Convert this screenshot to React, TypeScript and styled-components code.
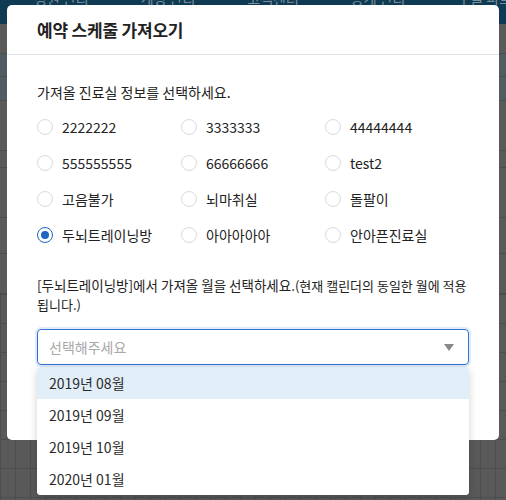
import React from "react";
import styled, { createGlobalStyle } from "styled-components";

const GlobalStyle = createGlobalStyle`
  html, body { margin: 0; padding: 0; }
  body {
    font-family: "Noto Sans CJK KR", "Noto Sans", sans-serif;
    color: #333;
  }
  * { box-sizing: border-box; }
`;

const Page = styled.div`
  position: relative;
  width: 506px;
  height: 500px;
  overflow: hidden;
  background: #5a5a5a;
  display: flex;
  flex-direction: column;
`;

const NavBar = styled.div`
  height: 24px;
  background: #0e3a53;
  display: flex;
  gap: 52px;
  padding-left: 34px;
  align-items: flex-start;
`;

const NavItem = styled.span`
  font-size: 14px;
  line-height: 14px;
  margin-top: -9px;
  color: #7d8f9a;
  white-space: nowrap;
`;

const BackBody = styled.div`
  flex: 1;
  display: flex;
  flex-direction: column;
`;

const BackRow = styled.div<{ $h: number; $tint?: boolean }>`
  height: ${(p) => p.$h}px;
  border-bottom: 1px solid #4c4c4c;
  background: ${(p) => (p.$tint ? "#515b62" : "transparent")};
`;

const BackGrid = styled.div`
  flex: 1;
  background-color: #595959;
  background-image: repeating-linear-gradient(
      to right,
      #4d4d4d 0px,
      #4d4d4d 1px,
      transparent 1px,
      transparent 15px
    ),
    repeating-linear-gradient(
      to bottom,
      #4d4d4d 0px,
      #4d4d4d 1px,
      transparent 1px,
      transparent 29px
    );
`;

const Modal = styled.div`
  position: absolute;
  left: 7px;
  top: 5px;
  width: 492px;
  height: 435px;
  background: #fff;
  border-radius: 5px;
  display: flex;
  flex-direction: column;
`;

const Header = styled.div`
  height: 50px;
  border-bottom: 1px solid #e3e3e3;
  padding: 0 30px;
  display: flex;
  align-items: center;
`;

const Title = styled.h2`
  margin: 0;
  font-size: 17px;
  font-weight: 700;
  color: #222;
  letter-spacing: -0.2px;
`;

const Body = styled.div`
  position: relative;
  padding: 27px 30px 0;
  display: flex;
  flex-direction: column;
`;

const Label = styled.p`
  margin: 0;
  font-size: 14px;
  line-height: 20px;
  color: #222;
`;

const RadioGrid = styled.div`
  margin-top: 7px;
  display: grid;
  grid-template-columns: repeat(3, 144px);
  grid-auto-rows: 36px;
`;

const RadioItem = styled.label`
  display: flex;
  align-items: center;
  gap: 9px;
  font-size: 14px;
  color: #222;
  cursor: pointer;
`;

const RadioCircle = styled.span<{ $checked?: boolean }>`
  width: 16px;
  height: 16px;
  border-radius: 50%;
  border: 1px solid ${(p) => (p.$checked ? "#1f63c4" : "#d9d9d9")};
  background: #fff;
  display: flex;
  align-items: center;
  justify-content: center;
  flex-shrink: 0;
  &::after {
    content: "";
    width: 8px;
    height: 8px;
    border-radius: 50%;
    background: ${(p) => (p.$checked ? "#1f63c4" : "transparent")};
  }
`;

const MonthLabel = styled.p`
  margin: 23px 0 0;
  font-size: 13.5px;
  line-height: 18px;
  color: #222;
`;

const Small = styled.span`
  font-size: 13px;
`;

const SelectBox = styled.div`
  margin-top: 15px;
  height: 36px;
  border: 1px solid #2f74d0;
  border-radius: 4px;
  box-shadow: 0 0 0 2px rgba(47, 116, 208, 0.15);
  display: flex;
  align-items: center;
  justify-content: space-between;
  padding: 0 12px 0 11px;
`;

const Placeholder = styled.span`
  font-size: 14px;
  color: #a8a8a8;
`;

const Caret = styled.span`
  width: 0;
  height: 0;
  border-left: 5px solid transparent;
  border-right: 5px solid transparent;
  border-top: 7px solid #888;
  margin-right: 2px;
`;

const Menu = styled.ul`
  position: absolute;
  left: 37px;
  top: 367px;
  width: 432px;
  margin: 0;
  padding: 0;
  list-style: none;
  background: #fff;
  border-radius: 4px;
  overflow: hidden;
  box-shadow: 0 2px 8px rgba(0, 0, 0, 0.18);
`;

const MenuItem = styled.li<{ $active?: boolean }>`
  height: 32px;
  display: flex;
  align-items: center;
  padding-left: 12px;
  font-size: 14px;
  color: #2a2a2a;
  background: ${(p) => (p.$active ? "#e1eef8" : "#fff")};
`;

const rooms = [
  "2222222",
  "3333333",
  "44444444",
  "555555555",
  "66666666",
  "test2",
  "고음불가",
  "뇌마취실",
  "돌팔이",
  "두뇌트레이닝방",
  "아아아아아",
  "안아픈진료실",
];

const months = ["2019년 08월", "2019년 09월", "2019년 10월", "2020년 01월"];

export default function App() {
  const selected = "두뇌트레이닝방";
  return (
    <>
      <GlobalStyle />
      <Page>
        <NavBar>
          <NavItem>정원 관리</NavItem>
          <NavItem>계정 관리</NavItem>
          <NavItem>고객센터</NavItem>
          <NavItem>통계 관리</NavItem>
          <NavItem>구글 파트너스</NavItem>
        </NavBar>
        <BackBody>
          <BackRow $h={30} />
          <BackRow $h={23} $tint />
          <BackRow $h={24} $tint />
          <BackRow $h={50} />
          <BackRow $h={17} />
          <BackRow $h={50} />
          <BackRow $h={36} />
          <BackRow $h={40} />
          <BackGrid />
        </BackBody>
        <Modal>
          <Header>
            <Title>예약 스케줄 가져오기</Title>
          </Header>
          <Body>
            <Label>가져올 진료실 정보를 선택하세요.</Label>
            <RadioGrid>
              {rooms.map((r) => (
                <RadioItem key={r}>
                  <RadioCircle $checked={r === selected} />
                  {r}
                </RadioItem>
              ))}
            </RadioGrid>
            <MonthLabel>
              [{selected}]에서 가져올 월을 선택하세요.
              <Small>(현재 캘린더의 동일한 월에 적용 됩니다.)</Small>
            </MonthLabel>
            <SelectBox>
              <Placeholder>선택해주세요</Placeholder>
              <Caret />
            </SelectBox>
          </Body>
        </Modal>
        <Menu>
          {months.map((m, i) => (
            <MenuItem key={m} $active={i === 0}>
              {m}
            </MenuItem>
          ))}
        </Menu>
      </Page>
    </>
  );
}
